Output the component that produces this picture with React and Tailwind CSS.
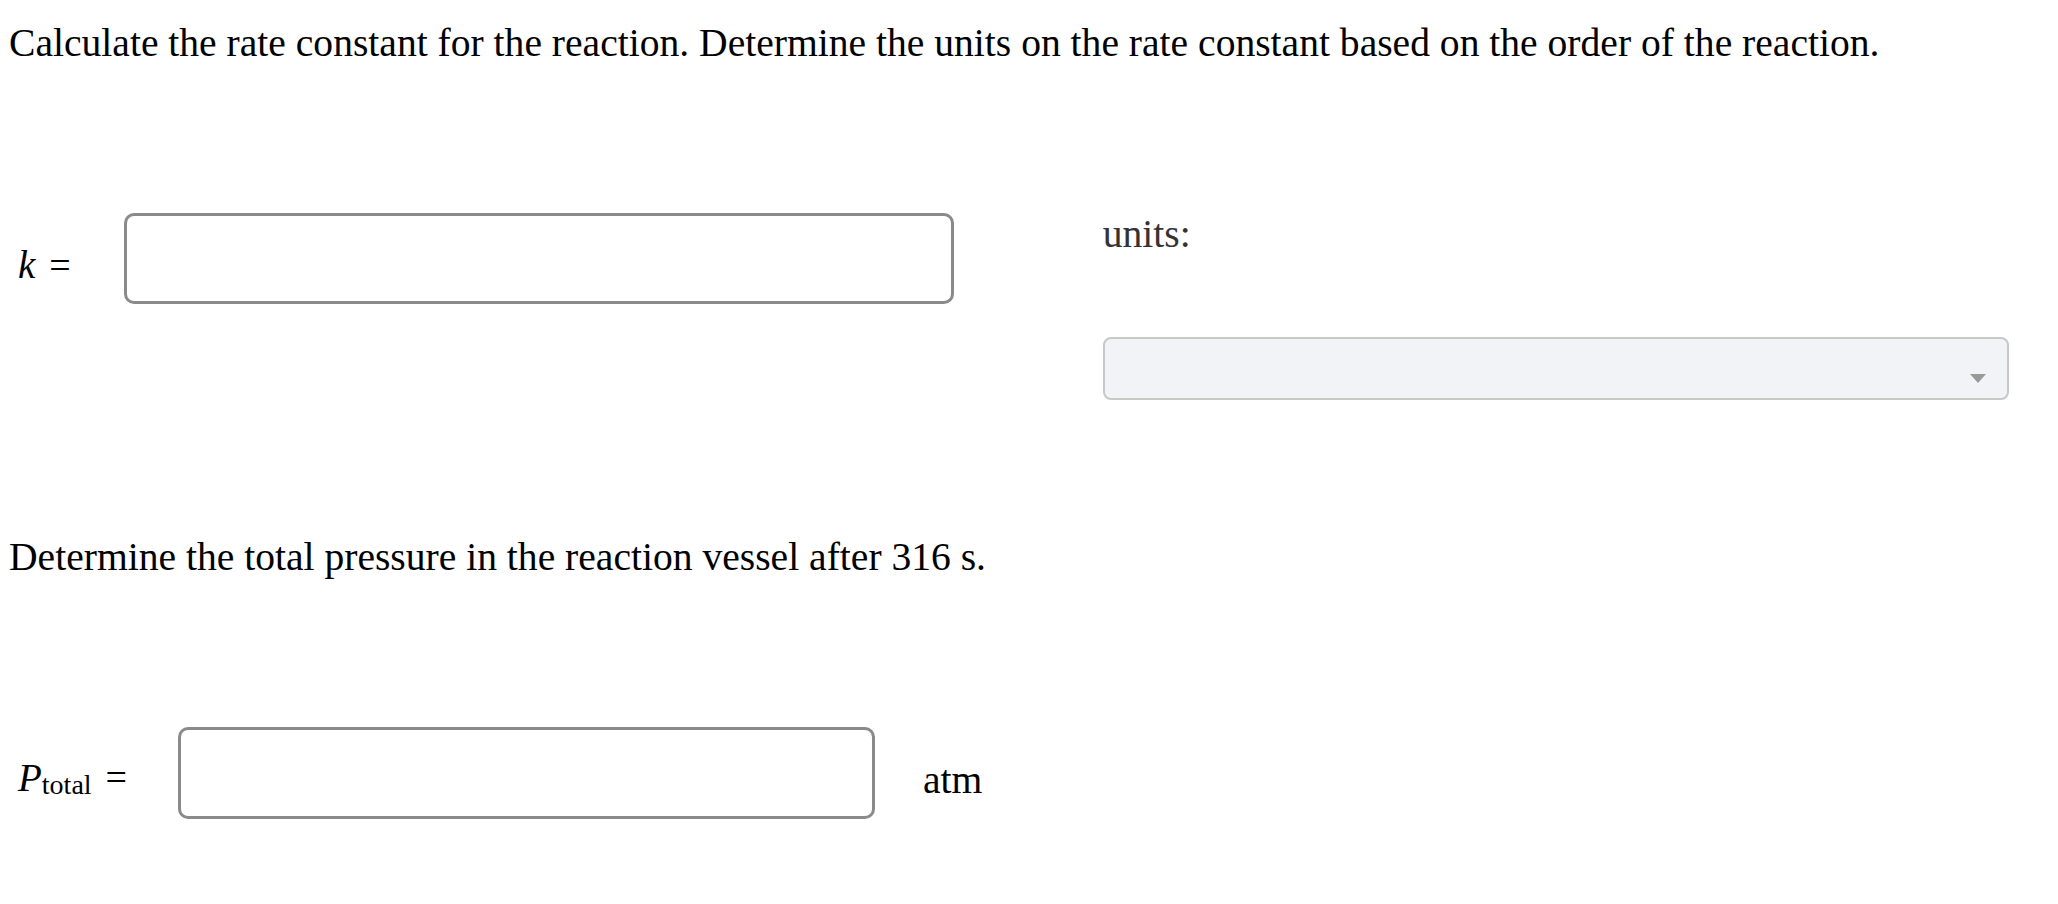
import React from "react";

const serif = "font-['Liberation_Serif','Times_New_Roman',serif]";

const App = () => {
    return (
        <div className={`${serif} min-h-[904px] bg-white pl-[9px] text-black`}>
            <p className="pt-[20px] text-[39.6px] leading-[46px]">
                Calculate the rate constant for the reaction. Determine the units on the rate constant based on the order of the reaction.
            </p>

            {/* rate constant row */}
            <div className="mt-[147px] flex items-start">
                <div className="flex items-start">
                    <span className="ml-[9px] mt-[31px] text-[39px] leading-[42px] italic">k</span>
                    <span className="ml-[14px] mt-[31px] text-[38px] leading-[42px]">=</span>
                    <input
                        type="text"
                        className="ml-[53px] h-[91px] w-[830px] rounded-[10px] border-[3px] border-[#8a8a8a] bg-white outline-none"
                    />
                </div>
                <div className="ml-[149px] flex flex-col">
                    <span className="text-[39.6px] leading-[42px] text-[#333]">units:</span>
                    <div className="relative mt-[82px] h-[63px] w-[906px] rounded-lg border-2 border-[#c8c8c8] bg-[#f2f3f7]">
                        <svg className="absolute right-[21px] top-[35px]" width="16" height="9" viewBox="0 0 16 9">
                            <path d="M0 0 L16 0 L8 9 Z" fill="#999" />
                        </svg>
                    </div>
                </div>
            </div>

            <p className="mt-[134px] text-[39.6px] leading-[46px]">
                Determine the total pressure in the reaction vessel after 316 s.
            </p>

            {/* total pressure row */}
            <div className="mt-[147px] flex items-start">
                <span className="ml-[9px] mt-[30px] text-[39px] leading-[42px] italic">P</span>
                <span className="mt-[43px] text-[28px] leading-[30px]">total</span>
                <span className="ml-[14px] mt-[29px] text-[38px] leading-[42px]">=</span>
                <input
                    type="text"
                    className="ml-[51px] h-[92px] w-[697px] rounded-[10px] border-[3px] border-[#8a8a8a] bg-white outline-none"
                />
                <span className="ml-[48px] mt-[32px] text-[39.6px] leading-[42px]">atm</span>
            </div>
        </div>
    );
};

export default App;
